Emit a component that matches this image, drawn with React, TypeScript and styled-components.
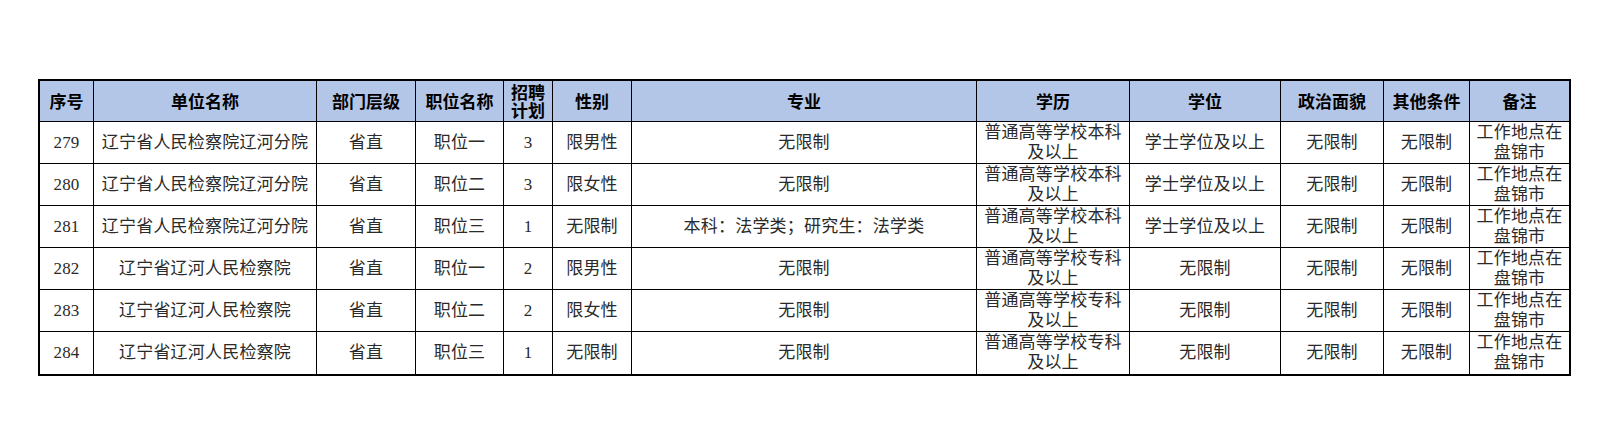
import styled, { createGlobalStyle } from "styled-components"

const GlobalStyle = createGlobalStyle`
  html, body {
    margin: 0;
    padding: 0;
    background: #ffffff;
  }
`

interface Row {
  no: string
  unit: string
  level: string
  post: string
  plan: string
  gender: string
  major: string
  edu: string
  degree: string
  politics: string
  other: string
  note: string
}

const columns = [54, 223, 99, 88, 49, 79, 345, 153, 151, 103, 86, 99]

const headers = [
  "序号",
  "单位名称",
  "部门层级",
  "职位名称",
  "招聘\n计划",
  "性别",
  "专业",
  "学历",
  "学位",
  "政治面貌",
  "其他条件",
  "备注",
]

const benke = "普通高等学校本科\n及以上"
const zhuanke = "普通高等学校专科\n及以上"
const note = "工作地点在\n盘锦市"

const rows: Row[] = [
  { no: "279", unit: "辽宁省人民检察院辽河分院", level: "省直", post: "职位一", plan: "3", gender: "限男性", major: "无限制", edu: benke, degree: "学士学位及以上", politics: "无限制", other: "无限制", note },
  { no: "280", unit: "辽宁省人民检察院辽河分院", level: "省直", post: "职位二", plan: "3", gender: "限女性", major: "无限制", edu: benke, degree: "学士学位及以上", politics: "无限制", other: "无限制", note },
  { no: "281", unit: "辽宁省人民检察院辽河分院", level: "省直", post: "职位三", plan: "1", gender: "无限制", major: "本科：法学类；研究生：法学类", edu: benke, degree: "学士学位及以上", politics: "无限制", other: "无限制", note },
  { no: "282", unit: "辽宁省辽河人民检察院", level: "省直", post: "职位一", plan: "2", gender: "限男性", major: "无限制", edu: zhuanke, degree: "无限制", politics: "无限制", other: "无限制", note },
  { no: "283", unit: "辽宁省辽河人民检察院", level: "省直", post: "职位二", plan: "2", gender: "限女性", major: "无限制", edu: zhuanke, degree: "无限制", politics: "无限制", other: "无限制", note },
  { no: "284", unit: "辽宁省辽河人民检察院", level: "省直", post: "职位三", plan: "1", gender: "无限制", major: "无限制", edu: zhuanke, degree: "无限制", politics: "无限制", other: "无限制", note },
]

const Page = styled.div`
  padding: 79px 0 48px 38px;
`

const Sheet = styled.div`
  display: grid;
  grid-template-columns: ${columns.map((c) => `${c}px`).join(" ")};
  grid-template-rows: 41px repeat(6, 42px);
  width: fit-content;
  border: 2px solid #000;
`

const Cell = styled.div<{ $last?: boolean; $bottom?: boolean }>`
  box-sizing: border-box;
  display: flex;
  align-items: center;
  justify-content: center;
  text-align: center;
  white-space: pre-line;
  border-right: ${({ $last }) => ($last ? "none" : "1px solid #000")};
  border-bottom: ${({ $bottom }) => ($bottom ? "none" : "1px solid #000")};
`

const HeadCell = styled(Cell)`
  background: #b4c6e7;
  font-family: "Noto Sans CJK SC", "Noto Sans", sans-serif;
  font-weight: 700;
  font-size: 17px;
  line-height: 18px;
  color: #000;
`

const BodyCell = styled(Cell)`
  font-family: "Liberation Serif", "Noto Sans CJK SC", serif;
  font-size: 17px;
  line-height: 20px;
  letter-spacing: 0.2px;
  color: #2a2a2a;
`

const keys: (keyof Row)[] = [
  "no",
  "unit",
  "level",
  "post",
  "plan",
  "gender",
  "major",
  "edu",
  "degree",
  "politics",
  "other",
  "note",
]

const App = () => {
  return (
    <>
      <GlobalStyle />
      <Page>
        <Sheet>
          {headers.map((h, i) => (
            <HeadCell key={h} $last={i === headers.length - 1}>
              {h}
            </HeadCell>
          ))}
          {rows.map((row, r) =>
            keys.map((k, i) => (
              <BodyCell
                key={`${row.no}-${k}`}
                $last={i === keys.length - 1}
                $bottom={r === rows.length - 1}
              >
                {row[k]}
              </BodyCell>
            ))
          )}
        </Sheet>
      </Page>
    </>
  )
}

export default App
